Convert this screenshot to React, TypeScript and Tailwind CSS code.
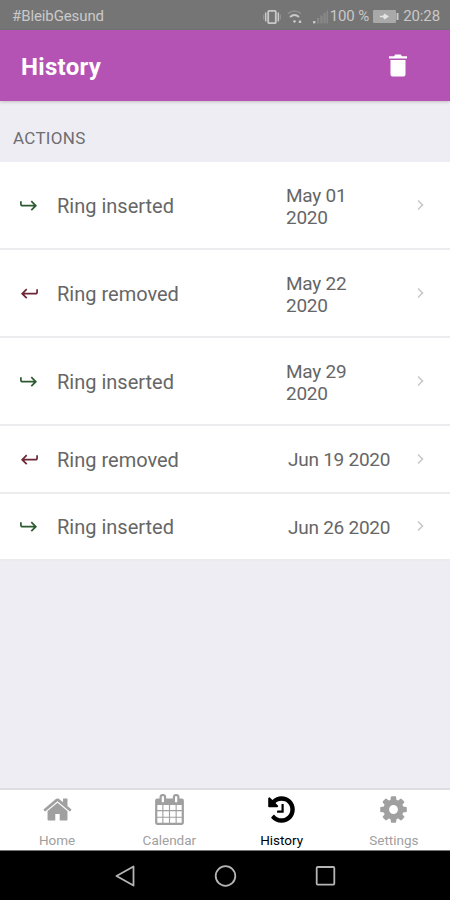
import type { ReactNode } from 'react';
import clsx from 'clsx';

type Action = {
  kind: 'inserted' | 'removed';
  date: string[];
};

const actions: Action[] = [
  { kind: 'inserted', date: ['May 01', '2020'] },
  { kind: 'removed', date: ['May 22', '2020'] },
  { kind: 'inserted', date: ['May 29', '2020'] },
  { kind: 'removed', date: ['Jun 19 2020'] },
  { kind: 'inserted', date: ['Jun 26 2020'] },
];

const tabs = [
  {
    label: 'Home',
    path: 'M1472 992v480q0 26-19 45t-45 19h-384v-384h-256v384h-384q-26 0-45-19t-19-45v-480q0-1 .5-3t.5-3l575-474 575 474q1 2 1 6zm223-69l-62 74q-8 9-21 11h-3q-13 0-21-7l-692-577-692 577q-12 8-24 7-13-2-21-11l-62-74q-8-10-7-23.5t11-21.5l719-599q32-26 76-26t76 26l244 204v-195q0-14 9-23t23-9h192q14 0 23 9t9 23v408l219 182q10 8 11 21.5t-7 23.5z',
  },
  {
    label: 'Calendar',
    path: 'M192 1664h288v-288h-288v288zm352 0h320v-288h-320v288zm-352-352h288v-320h-288v320zm352 0h320v-320h-320v320zm-352-384h288v-288h-288v288zm736 736h320v-288h-320v288zm-384-736h320v-288h-320v288zm768 736h288v-288h-288v288zm-384-352h320v-320h-320v320zm-352-864v-288q0-13-9.5-22.5t-22.5-9.5h-64q-13 0-22.5 9.5t-9.5 22.5v288q0 13 9.5 22.5t22.5 9.5h64q13 0 22.5-9.5t9.5-22.5zm736 864h288v-320h-288v320zm-384-384h320v-288h-320v288zm384 0h288v-288h-288v288zm32-480v-288q0-13-9.5-22.5t-22.5-9.5h-64q-13 0-22.5 9.5t-9.5 22.5v288q0 13 9.5 22.5t22.5 9.5h64q13 0 22.5-9.5t9.5-22.5zm384-64v1280q0 52-38 90t-90 38h-1408q-52 0-90-38t-38-90v-1280q0-52 38-90t90-38h128v-96q0-66 47-113t113-47h64q66 0 113 47t47 113v96h384v-96q0-66 47-113t113-47h64q66 0 113 47t47 113v96h128q52 0 90 38t38 90z',
  },
  {
    label: 'History',
    active: true,
    path: 'M1664 896q0 156-61 298t-164 245-245 164-298 61q-172 0-327-72.5t-264-204.5q-7-10-6.5-22.5t8.5-20.5l137-138q10-9 25-9 16 2 23 12 73 95 179 147t225 52q104 0 198.5-40.5t163.5-109.5 109.5-163.5 40.5-198.5-40.5-198.5-109.5-163.5-163.5-109.5-198.5-40.5q-98 0-188 35.5t-160 101.5l137 138q31 30 14 69-17 40-59 40h-448q-26 0-45-19t-19-45v-448q0-42 40-59 39-17 69 14l130 129q107-101 244.5-156.5t284.5-55.5q156 0 298 61t245 164 164 245 61 298zm-640-288v448q0 14-9 23t-23 9h-320q-14 0-23-9t-9-23v-64q0-14 9-23t23-9h224v-352q0-14 9-23t23-9h64q14 0 23 9t9 23z',
  },
  {
    label: 'Settings',
    path: 'M1152 896q0-106-75-181t-181-75-181 75-75 181 75 181 181 75 181-75 75-181zm512-109v222q0 12-8 23t-20 13l-185 28q-19 54-39 91 35 50 107 138 10 12 10 25t-9 23q-27 37-99 108t-94 71q-12 0-26-9l-138-108q-44 23-91 38-16 136-29 186-7 28-36 28h-222q-14 0-24.5-8.5t-11.5-21.5l-28-184q-49-16-90-37l-141 107q-10 9-25 9-14 0-25-11-126-114-165-168-7-10-7-23 0-12 8-23 15-21 51-66.5t54-70.5q-27-50-41-99l-183-27q-13-2-21-12.5t-8-23.5v-222q0-12 8-23t19-13l186-28q14-46 39-92-40-57-107-138-10-12-10-24 0-10 9-23 26-36 98.5-107.5t94.5-71.5q13 0 26 10l138 107q44-23 91-38 16-136 29-186 7-28 36-28h222q14 0 24.5 8.5t11.5 21.5l28 184q49 16 90 37l142-107q9-9 24-9 13 0 25 10 129 119 165 170 7 8 7 22 0 12-8 23-15 21-51 66.5t-54 70.5q26 50 41 98l183 28q13 2 21 12.5t8 23.5z',
  },
];

function StatusBar() {
  return (
    <div className="flex h-[30px] shrink-0 items-center bg-[#757575] pt-[3px] pr-[10px] pl-3 text-[#c9c9c9]">
      <span className="text-[15px] leading-none tracking-[-0.1px]">#BleibGesund</span>
      <svg className="ml-auto" width="18" height="16" viewBox="0 0 18 16" fill="none" stroke="currentColor">
        <rect x="5.2" y="1.8" width="7.6" height="12.4" rx="1" strokeWidth="1.8" />
        <path d="M2.7 3.5v9M15.3 3.5v9" strokeWidth="1.5" />
        <path d="M.7 5.5v5M17.3 5.5v5" strokeWidth="1.1" opacity=".4" />
      </svg>
      <svg className="ml-[6px]" width="16" height="16" viewBox="0 0 16 16" fill="none" stroke="currentColor">
        <path d="M1 4.500q6.500-5 13 0" strokeWidth="1.6" opacity=".3" />
        <path d="M3 8q4.500-4 9 0" strokeWidth="1.8" />
        <path d="M5.800 12q1.700-1.500 3.400 0l-1.700 2.200zM11.800 11.500h2.400v2.600h-2.400z" fill="currentColor" stroke="none" />
      </svg>
      <svg className="ml-[9px]" width="17" height="16" viewBox="0 0 17 16" fill="currentColor">
        <path d="M1 12h2.400v2.400H1z" />
        <path d="M5 9h2.200v5.400H5zM8.300 6.500h2.200v7.900H8.300zM11.500 4h2.200v10.400h-2.200zM14.500 1.500h1.500v12.900h-1.500z" opacity=".25" />
      </svg>
      <span className="ml-[1px] text-[15px] leading-none tracking-[-0.1px]">100 %</span>
      <svg className="ml-1" width="27" height="15" viewBox="0 0 27 15">
        <rect x="0" y="1" width="23" height="13" rx="1" fill="#a9a9a9" />
        <path d="M24.500 4v7" stroke="#c9c9c9" strokeWidth="2" />
        <path d="M7 6.700h3l1.500-2.200 4.500 3-4.500 3-1.500-2.200H7z" fill="#e4e4e4" />
      </svg>
      <span className="ml-[3px] text-[15px] leading-none tracking-[-0.1px]">20:28</span>
    </div>
  );
}

function ReturnArrow({ kind }: { kind: Action['kind'] }) {
  return (
    <svg
      className={clsx(
        'mt-[2px] ml-5 shrink-0',
        kind === 'inserted' ? 'text-[#2c5a31]' : '-scale-x-100 text-[#6b2634]',
      )}
      width="18"
      height="14"
      viewBox="0 0 18 14"
      fill="none"
      stroke="currentColor"
      strokeWidth="1.7"
    >
      <path d="M.9 2.200v2.800q0 1.700 1.700 1.700h12.900M11.300 2.200l4.500 4.500-4.500 4.500" />
    </svg>
  );
}

function Row({ action }: { action: Action }) {
  const short = action.date.length === 1;
  return (
    <li
      className={clsx(
        'flex items-center border-b-2 border-[#ececee] text-[#666]',
        short ? 'h-[67.5px]' : 'h-[88px]',
      )}
    >
      <ReturnArrow kind={action.kind} />
      <span className={clsx('ml-[19px] flex-1 text-[20px]', short ? 'pt-[2px]' : 'pt-[1px]')}>Ring {action.kind}</span>
      <span className={clsx('pt-[3px] text-[19px] leading-[22px] tracking-[-0.25px]', short ? 'w-[128px]' : 'w-[130px]')}>
        {action.date.map((line) => (
          <span key={line} className="block whitespace-nowrap">
            {line}
          </span>
        ))}
      </span>
      <svg className="mr-[25px]" width="9" height="12" viewBox="0 0 9 12" fill="none" stroke="#c8c8cc" strokeWidth="1.6">
        <path d="M2 1.500l4.500 4.500-4.500 4.500" />
      </svg>
    </li>
  );
}

function NavButton({ children }: { children: ReactNode }) {
  return (
    <svg width="24" height="24" viewBox="0 0 24 24" fill="none" stroke="#b5b5b5" strokeWidth="1.8">
      {children}
    </svg>
  );
}

export default function App() {
  return (
    <div className="flex h-[900px] w-[450px] flex-col overflow-hidden bg-[#eeedf3] font-['Roboto',sans-serif]">
      <StatusBar />

      <header className="z-10 flex h-[70.5px] shrink-0 items-center justify-between bg-[#b553b5] pr-[43px] pl-[21px] text-white shadow-[0_1px_3px_rgba(0,0,0,0.2)]">
        <h1 className="pt-[4px] text-[24px] font-bold tracking-[0.3px]">History</h1>
        <svg width="18" height="23" viewBox="0 0 18 23" fill="currentColor">
          <path d="M1.500 6h15v14.500a2 2 0 0 1-2 2h-11a2 2 0 0 1-2-2zM0 2.200h5l1.300-1.700h5.400L13 2.200h5v2.300H0z" />
        </svg>
      </header>

      <main className="flex-1">
        <h2 className="h-[61.5px] pt-[25.5px] pl-[13px] text-[17px] tracking-[0.3px] text-[#6d6d72]">ACTIONS</h2>
        <ul className="bg-white">
          {actions.map((action) => (
            <Row key={action.date.join(' ')} action={action} />
          ))}
        </ul>
      </main>

      {/* tab bar */}
      <nav className="grid h-[63px] shrink-0 grid-cols-4 border-t-2 border-b-1 border-t-[#dedee2] border-b-[#777] bg-white pl-[1px]">
        {tabs.map((tab) => (
          <div
            key={tab.label}
            className={clsx('flex flex-col items-center pt-1', tab.active ? 'text-black' : 'text-[#a0a0a0]')}
          >
            <svg width="31" height="31" viewBox="0 0 1792 1792" fill="currentColor">
              <path d={tab.path} />
            </svg>
            <span className="mt-[7px] text-[13.5px] leading-[16px]">{tab.label}</span>
          </div>
        ))}
      </nav>

      {/* android buttons */}
      <div className="flex h-[49px] shrink-0 items-center justify-center gap-[76px] bg-black">
        <NavButton>
          <path d="M20.500 2.500v19L3.500 12z" strokeLinejoin="round" />
        </NavButton>
        <NavButton>
          <circle cx="12.5" cy="12" r="9.800" />
        </NavButton>
        <NavButton>
          <rect x="3.700" y="3" width="17.600" height="17.600" rx="1" />
        </NavButton>
      </div>
    </div>
  );
}
